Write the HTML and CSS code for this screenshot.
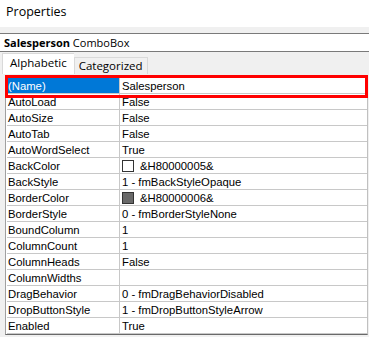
FILE: index.html
```html
<!DOCTYPE html>
<html lang="en">
<head>
  <meta charset="UTF-8">
  <title>Properties</title>
  <link rel="stylesheet" href="styles.css">
</head>
<body>
  <!-- Window title -->
  <div class="title">Properties</div>

  <!-- Object selector -->
  <div class="object-box"><b>Salesperson</b> ComboBox</div>

  <!-- Tabs -->
  <div class="tabs">
    <div class="tab active">Alphabetic</div>
    <div class="tab">Categorized</div>
  </div>

  <!-- Property grid -->
  <div class="grid-wrap">
    <div class="grid">
      <div class="row selected"><div class="name">(Name)</div><div class="value">Salesperson</div></div>
      <div class="row"><div class="name">AutoLoad</div><div class="value">False</div></div>
      <div class="row"><div class="name">AutoSize</div><div class="value">False</div></div>
      <div class="row"><div class="name">AutoTab</div><div class="value">False</div></div>
      <div class="row"><div class="name">AutoWordSelect</div><div class="value">True</div></div>
      <div class="row"><div class="name">BackColor</div><div class="value"><span class="swatch white"></span>&amp;H80000005&amp;</div></div>
      <div class="row"><div class="name">BackStyle</div><div class="value">1 - fmBackStyleOpaque</div></div>
      <div class="row"><div class="name">BorderColor</div><div class="value"><span class="swatch gray"></span>&amp;H80000006&amp;</div></div>
      <div class="row"><div class="name">BorderStyle</div><div class="value">0 - fmBorderStyleNone</div></div>
      <div class="row"><div class="name">BoundColumn</div><div class="value">1</div></div>
      <div class="row"><div class="name">ColumnCount</div><div class="value">1</div></div>
      <div class="row"><div class="name">ColumnHeads</div><div class="value">False</div></div>
      <div class="row"><div class="name">ColumnWidths</div><div class="value"></div></div>
      <div class="row"><div class="name">DragBehavior</div><div class="value">0 - fmDragBehaviorDisabled</div></div>
      <div class="row"><div class="name">DropButtonStyle</div><div class="value">1 - fmDropButtonStyleArrow</div></div>
      <div class="row"><div class="name">Enabled</div><div class="value">True</div></div>
    </div>
    <!-- Red highlight annotation -->
    <div class="highlight"></div>
  </div>
</body>
</html>
```

FILE: styles.css
```css
/* General */
body {
  margin: 0;
  background-color: #f0f0f0;
  font-family: "Liberation Sans", Arial, sans-serif;
  font-size: 11px;
  color: #000;
  width: 369px;
  height: 337px;
  overflow: hidden;
}

/* Title */
.title {
  height: 27px;
  background-color: #fff;
  padding-left: 6px;
  line-height: 24px;
  font-family: "Open Sans", sans-serif;
  font-size: 12.5px;
}

/* Object selector */
.object-box {
  margin-top: 6px;
  height: 17px;
  background-color: #fff;
  border-top: 1px solid #7a7a7a;
  border-bottom: 1px solid #7a7a7a;
  padding-left: 4px;
  line-height: 18px;
  font-family: "Open Sans", sans-serif;
  font-size: 11px;
}

/* Tabs */
.tabs {
  display: flex;
  align-items: flex-end;
  height: 22px;
  padding-left: 2px;
}

.tab {
  height: 16px;
  padding: 0 4px;
  line-height: 16px;
  border: 1px solid #d9d9d9;
  border-bottom: none;
  font-family: "Open Sans", sans-serif;
  font-size: 11.5px;
}

.tab.active {
  height: 20px;
  line-height: 18px;
  padding: 0 7px;
  background-color: #fff;
  border-right: none;
}

/* Property grid */
.grid-wrap {
  position: relative;
  margin-top: 4px;
  padding-left: 5px;
}

.grid {
  width: 360px;
  background-color: #fff;
  border-left: 1px solid #a0a0a0;
  border-right: 1px solid #c0c0c0;
  border-bottom: 1px solid #696969;
  padding-left: 1px;
}

.row {
  display: flex;
  height: 16px;
  border-bottom: 1px solid #c8c8c8;
  box-sizing: border-box;
  line-height: 16px;
  font-size: 11.3px;
}

.row .name {
  width: 111px;
  padding-left: 1px;
  border-right: 1px solid #c8c8c8;
  white-space: nowrap;
}

.row .value {
  flex: 1;
  padding-left: 2px;
  display: flex;
  align-items: center;
  white-space: nowrap;
}

.row.selected .name {
  background-color: #0078d7;
  color: #fff;
}

.swatch {
  width: 10px;
  height: 10px;
  border: 1px solid #333;
  margin-right: 6px;
}

.swatch.white {
  background-color: #fff;
}

.swatch.gray {
  background-color: #696969;
}

/* Red annotation box */
.highlight {
  position: absolute;
  left: 5px;
  top: -3px;
  width: 357px;
  height: 17px;
  border: 3px solid #ff0000;
}
```
